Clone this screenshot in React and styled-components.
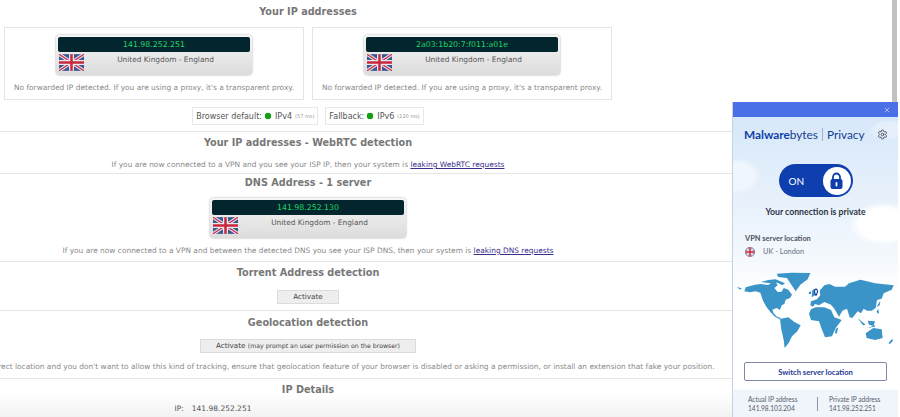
import React from "react";
import styled, { createGlobalStyle } from "styled-components";
import { Settings, X } from "lucide-react";

const Global = createGlobalStyle`
  html, body {
    margin: 0;
    padding: 0;
    height: 417px;
    overflow: hidden;
    background: #fff;
    font-family: "DejaVu Sans", sans-serif;
  }
`;

const Page = styled.div`
  position: relative;
  width: 900px;
  height: 417px;
  overflow: hidden;
`;

const Content = styled.main`
  width: 1016px;
  margin-left: -200px;
  color: #777;
  text-align: center;
`;

const Section = styled.section`
  height: ${(p) => p.$height}px;
  border-top: ${(p) => (p.$first ? "none" : "1px solid #e6e6e6")};
  box-sizing: border-box;
`;

const Heading = styled.h2`
  margin: 0;
  padding-top: ${(p) => p.$top || 0}px;
  font-size: 9.7px;
  line-height: 14px;
  font-weight: bold;
  color: #777;
`;

const Note = styled.p`
  margin: 0;
  padding-top: ${(p) => p.$top || 0}px;
  font-size: 7.45px;
  line-height: 11px;
  color: #8a8a8a;
  white-space: nowrap;

  a {
    color: #3a2f8c;
    text-decoration: underline;
  }
`;

const BoxRow = styled.div`
  display: flex;
  justify-content: center;
  gap: 8px;
  padding-top: 8px;
`;

const IpBox = styled.div`
  width: 300px;
  height: 73px;
  box-sizing: border-box;
  border: 1px solid #e4e4e4;
  display: flex;
  flex-direction: column;
  align-items: center;
  padding-top: 7px;
`;

const Card = styled.div`
  width: 196px;
  height: 40px;
  box-sizing: border-box;
  margin: ${(p) => p.$top || 0}px auto 0;
  padding: 2px;
  border-radius: 4px;
  background: linear-gradient(#f6f6f6, #dcdcdc);
  box-shadow: 0 0 2px #9a9a9a;
  text-align: left;
`;

const LedBar = styled.div`
  height: 15px;
  border-radius: 2px;
  background: #03262e;
  color: #22d564;
  font-size: 7.8px;
  line-height: 15px;
  text-align: center;
`;

const CardBody = styled.div`
  display: flex;
  align-items: flex-start;
  padding: 2px 0 0 1px;
`;

const Country = styled.span`
  flex: 1;
  text-align: center;
  font-size: 7.4px;
  line-height: 11px;
  color: #555;
  padding-right: 3px;
`;

const Badges = styled.div`
  display: flex;
  justify-content: center;
  gap: 7px;
  padding-top: 7px;
`;

const Badge = styled.div`
  display: flex;
  align-items: center;
  height: 18px;
  box-sizing: border-box;
  padding: 0 3px;
  border: 1px solid #e8e8e8;
  font-size: 8px;
  color: #555;
  white-space: nowrap;

  small {
    font-size: 5px;
    color: #999;
    margin-left: 3px;
  }
`;

const Dot = styled.i`
  width: 6px;
  height: 6px;
  margin: 0 4px 0 3px;
  border-radius: 50%;
  background: #12a012;
  box-shadow: 0 0 1px #0a600a;
`;

const ActionButton = styled.button`
  display: block;
  margin: ${(p) => p.$top}px auto 0;
  width: ${(p) => p.$width}px;
  height: 14px;
  padding: 0;
  border: 1px solid #dcdcdc;
  background: #eeeeee;
  color: #444;
  font-family: inherit;
  font-size: 7.2px;
  line-height: 12px;

  small {
    font-size: 6.2px;
  }
`;

const Details = styled.section`
  height: 39px;
  border-top: 1px solid #e6e6e6;
  box-sizing: border-box;
  background: linear-gradient(#fff 40%, #f2f2f2);
`;

const DetailRow = styled.div`
  display: flex;
  justify-content: center;
  gap: 8px;
  padding: 7px 190px 0 0;
  font-size: 7.5px;
  line-height: 10px;
  color: #555;
`;

const Scrollbar = styled.div`
  position: absolute;
  top: 0;
  right: 3px;
  width: 5px;
  height: 102px;
  background: #c2c2c2;
`;

const Popup = styled.aside`
  position: absolute;
  left: 733px;
  top: 102px;
  width: 165px;
  height: 315px;
  display: flex;
  flex-direction: column;
  box-shadow: -1px 0 0 #c4d2e4;
  background:
    radial-gradient(ellipse 34px 22px at 150px 122px, #ffffff 70%, transparent 100%),
    radial-gradient(ellipse 24px 18px at 4px 74px, #f0f6fd 70%, transparent 100%),
    radial-gradient(ellipse 20px 10px at 156px 28px, #e6f0fb 70%, transparent 100%),
    linear-gradient(#d4e6f9, #eef5fc 42%, #fff 62%);
  font-family: "Lato", "Noto Sans", sans-serif;
  color: #2a3244;
`;

const TitleBar = styled.div`
  height: 15px;
  flex: none;
  display: flex;
  align-items: center;
  justify-content: flex-end;
  padding-right: 7px;
  background: #4a70e8;
  color: #d4def8;
`;

const LogoRow = styled.div`
  display: flex;
  align-items: center;
  height: 18px;
  margin-top: 8px;
  padding: 0 10px 0 11px;
  color: #14408f;
  font-size: 11.8px;
  white-space: nowrap;

  b {
    font-weight: 700;
    color: #0f3fa8;
  }

  svg {
    margin-left: auto;
    color: #444c60;
  }
`;

const Pipe = styled.span`
  width: 1px;
  height: 13px;
  margin: 0 4px;
  background: #9fb2cc;
`;

const Toggle = styled.div`
  display: flex;
  align-items: center;
  justify-content: space-between;
  width: 74px;
  height: 33px;
  box-sizing: border-box;
  margin: 21px auto 0;
  padding: 0 2px 0 10px;
  border-radius: 17px;
  background: #0f3fae;
  color: #fff;
  font-size: 10px;
  font-weight: 400;
`;

const Knob = styled.div`
  width: 28px;
  height: 28px;
  border-radius: 50%;
  background: #fff;
  display: flex;
  align-items: center;
  justify-content: center;
`;

const Status = styled.p`
  margin: 9px 0 0;
  text-align: center;
  font-size: 8.7px;
  line-height: 12px;
  font-weight: 700;
  color: #2c3444;
`;

const ServerLabel = styled.div`
  margin: 16px 0 0 12px;
  font-size: 7.4px;
  line-height: 10px;
  font-weight: 700;
  color: #4b5262;
`;

const ServerRow = styled.div`
  display: flex;
  align-items: center;
  gap: 8px;
  margin: 2px 0 0 12px;
  font-size: 7.4px;
  line-height: 12px;
  color: #6a7080;
`;

const RoundFlag = styled.span`
  display: block;
  width: 10px;
  height: 10px;
  border-radius: 50%;
  overflow: hidden;
`;

const MapWrap = styled.div`
  margin: 10px 0 0 2px;
  height: 85px;
`;

const SwitchButton = styled.button`
  display: block;
  flex: none;
  width: 143px;
  height: 19px;
  margin: 9px 0 0 11px;
  padding: 0;
  border: 1px solid #8088a8;
  border-radius: 2px;
  background: #fff;
  color: #1c3a94;
  font-family: inherit;
  font-size: 7.6px;
  font-weight: 700;
`;

const IpStrip = styled.div`
  flex: 1;
  margin-top: 9px;
  display: flex;
  align-items: center;
  background: #f0f5fb;
  font-size: 6.6px;
  line-height: 9px;
  color: #555c6c;
`;

const IpCell = styled.div`
  flex: 1;
  padding-left: ${(p) => p.$left}px;
`;

const IpDivider = styled.span`
  width: 1px;
  height: 14px;
  background: #8a94a8;
`;

function UkFlag() {
  return (
    <svg width="25" height="17" viewBox="0 0 60 40" style={{ flex: "none" }}>
      <rect width="60" height="40" fill="#3c5690" />
      <path d="M0 0L60 40M60 0L0 40" stroke="#e8e8f0" strokeWidth="8" />
      <path d="M0 0L60 40M60 0L0 40" stroke="#c8324a" strokeWidth="3" />
      <path d="M30 0V40M0 20H60" stroke="#e8e8f0" strokeWidth="12" />
      <path d="M30 0V40M0 20H60" stroke="#c8283c" strokeWidth="6" />
    </svg>
  );
}

function IpCard({ ip, top }) {
  return (
    <Card $top={top}>
      <LedBar>{ip}</LedBar>
      <CardBody>
        <UkFlag />
        <Country>United Kingdom - England</Country>
      </CardBody>
    </Card>
  );
}

function Lock() {
  return (
    <svg width="15" height="18" viewBox="0 0 15 18">
      <path d="M4 8V5a3.5 3.5 0 0 1 7 0v3" fill="none" stroke="#0f3fae" strokeWidth="1.8" />
      <rect x="1.5" y="7" width="12" height="10" rx="2" fill="#0f3fae" />
      <rect x="6.6" y="10" width="1.8" height="4.4" rx="0.9" fill="#fff" />
    </svg>
  );
}

// traced by eye from the reference, viewBox is the 3x crop of the map
function WorldMap() {
  return (
    <svg width="160" height="85" viewBox="0 0 480 255" fill="#3a94c8" style={{ display: "block" }}>
      <path d="M6 57L20 61L15 65Z" />
      <path d="M28 70L32 58L60 50L78 48L100 51L108 45L122 43L128 52L118 60L128 72L140 71L146 60L160 65L171 80L165 90L152 95L148 108L140 112L135 126L125 120L112 125L116 136L126 146L138 150L134 154L120 146L106 132L94 116L84 98L76 74L62 70L44 73Z" />
      <path d="M78 42L100 36L122 34L150 46L142 52L128 44L108 46Z" />
      <path d="M125 17L170 14L226 15L218 34L196 50L182 70L166 46L156 30L130 27Z" />
      <path d="M135 153L160 148L178 162L197 172L187 190L171 205L161 225L149 240L146 215L139 185Z" />
      <path d="M222 137L228 124L242 118L268 118L288 126L298 148L320 156L302 180L291 205L270 208L259 180L252 160L228 156Z" />
      <path d="M226 112L228 100L246 94L256 82L254 68L268 52L284 48L300 56L330 56L342 46L376 35L396 40L420 46L476 52L470 65L446 76L440 92L426 96L422 120L410 128L396 128L386 122L378 136L368 130L352 150L344 148L336 122L322 128L312 146L298 122L288 110L268 102L252 112L240 108L234 116Z" />
      <path d="M232 66L245 60L243 80L230 88ZM222 72L229 70L228 78L221 78Z" />
      <path d="M392 196L415 180L440 184L443 210L420 216L395 210Z" />
      <path d="M460 226L472 212L474 218L465 228ZM302 183L310 178L305 197L300 195ZM368 150L392 170L384 172ZM398 158L420 160L416 174L402 170ZM424 132L430 122L432 138ZM396 180L420 176L422 172Z" />
      <path d="M430 108L436 98L434 112L424 118Z" />
      <path
        d="M243 82C237 74 237 64 243 64C249 64 249 74 243 82Z"
        fill="#fff"
        stroke="#1c3a94"
        strokeWidth="3.4"
      />
    </svg>
  );
}

export default function App() {
  return (
    <Page>
      <Global />
      <Content>
        <Section $first $height={131}>
          <Heading $top={5}>Your IP addresses</Heading>
          <BoxRow>
            <IpBox>
              <IpCard ip="141.98.252.251" />
              <Note $top={7}>No forwarded IP detected. If you are using a proxy, it's a transparent proxy.</Note>
            </IpBox>
            <IpBox>
              <IpCard ip="2a03:1b20:7:f011:a01e" />
              <Note $top={7}>No forwarded IP detected. If you are using a proxy, it's a transparent proxy.</Note>
            </IpBox>
          </BoxRow>
          <Badges>
            <Badge>
              Browser default: <Dot /> IPv4 <small>(57 ms)</small>
            </Badge>
            <Badge>
              Fallback: <Dot /> IPv6 <small>(120 ms)</small>
            </Badge>
          </Badges>
        </Section>
        <Section $height={42}>
          <Heading $top={4}>Your IP addresses - WebRTC detection</Heading>
          <Note $top={9}>
            If you are now connected to a VPN and you see your ISP IP, then your system is{" "}
            <a href="#webrtc">leaking WebRTC requests</a>
          </Note>
        </Section>
        <Section $height={88}>
          <Heading $top={2}>DNS Address - 1 server</Heading>
          <IpCard ip="141.98.252.130" top={8} />
          <Note $top={7}>
            If you are now connected to a VPN and between the detected DNS you see your ISP DNS, then your system is{" "}
            <a href="#dns">leaking DNS requests</a>
          </Note>
        </Section>
        <Section $height={49}>
          <Heading $top={4}>Torrent Address detection</Heading>
          <ActionButton $top={10} $width={62}>Activate</ActionButton>
        </Section>
        <Section $height={68}>
          <Heading $top={5}>Geolocation detection</Heading>
          <ActionButton $top={9} $width={216}>
            Activate <small>(may prompt an user permission on the browser)</small>
          </ActionButton>
          <Note $top={8}>
            If the map shows your correct location and you don't want to allow this kind of tracking, ensure that geolocation feature of your browser is disabled or asking a permission, or install an extension that fake your position.
          </Note>
        </Section>
        <Details>
          <Heading $top={4}>IP Details</Heading>
          <DetailRow>
            <span>IP:</span>
            <span>141.98.252.251</span>
          </DetailRow>
        </Details>
      </Content>

      <Scrollbar />

      <Popup>
        <TitleBar>
          <X size={8} strokeWidth={2} />
        </TitleBar>
        <LogoRow>
          <b>Malware</b>bytes<Pipe />Privacy
          <Settings size={11} />
        </LogoRow>
        <Toggle>
          ON
          <Knob>
            <Lock />
          </Knob>
        </Toggle>
        <Status>Your connection is private</Status>
        <ServerLabel>VPN server location</ServerLabel>
        <ServerRow>
          <RoundFlag>
            <svg width="10" height="10" viewBox="0 0 20 20" style={{ display: "block" }}>
              <rect width="20" height="20" fill="#34508c" />
              <path d="M0 0L20 20M20 0L0 20" stroke="#eee" strokeWidth="3" />
              <path d="M10 0V20M0 10H20" stroke="#eee" strokeWidth="6" />
              <path d="M10 0V20M0 10H20" stroke="#c8283c" strokeWidth="3" />
            </svg>
          </RoundFlag>
          UK - London
        </ServerRow>
        <MapWrap>
          <WorldMap />
        </MapWrap>
        <SwitchButton>Switch server location</SwitchButton>
        <IpStrip>
          <IpCell $left={15}>
            Actual IP address
            <br />
            141.98.103.204
          </IpCell>
          <IpDivider />
          <IpCell $left={11}>
            Private IP address
            <br />
            141.98.252.251
          </IpCell>
        </IpStrip>
      </Popup>
    </Page>
  );
}
